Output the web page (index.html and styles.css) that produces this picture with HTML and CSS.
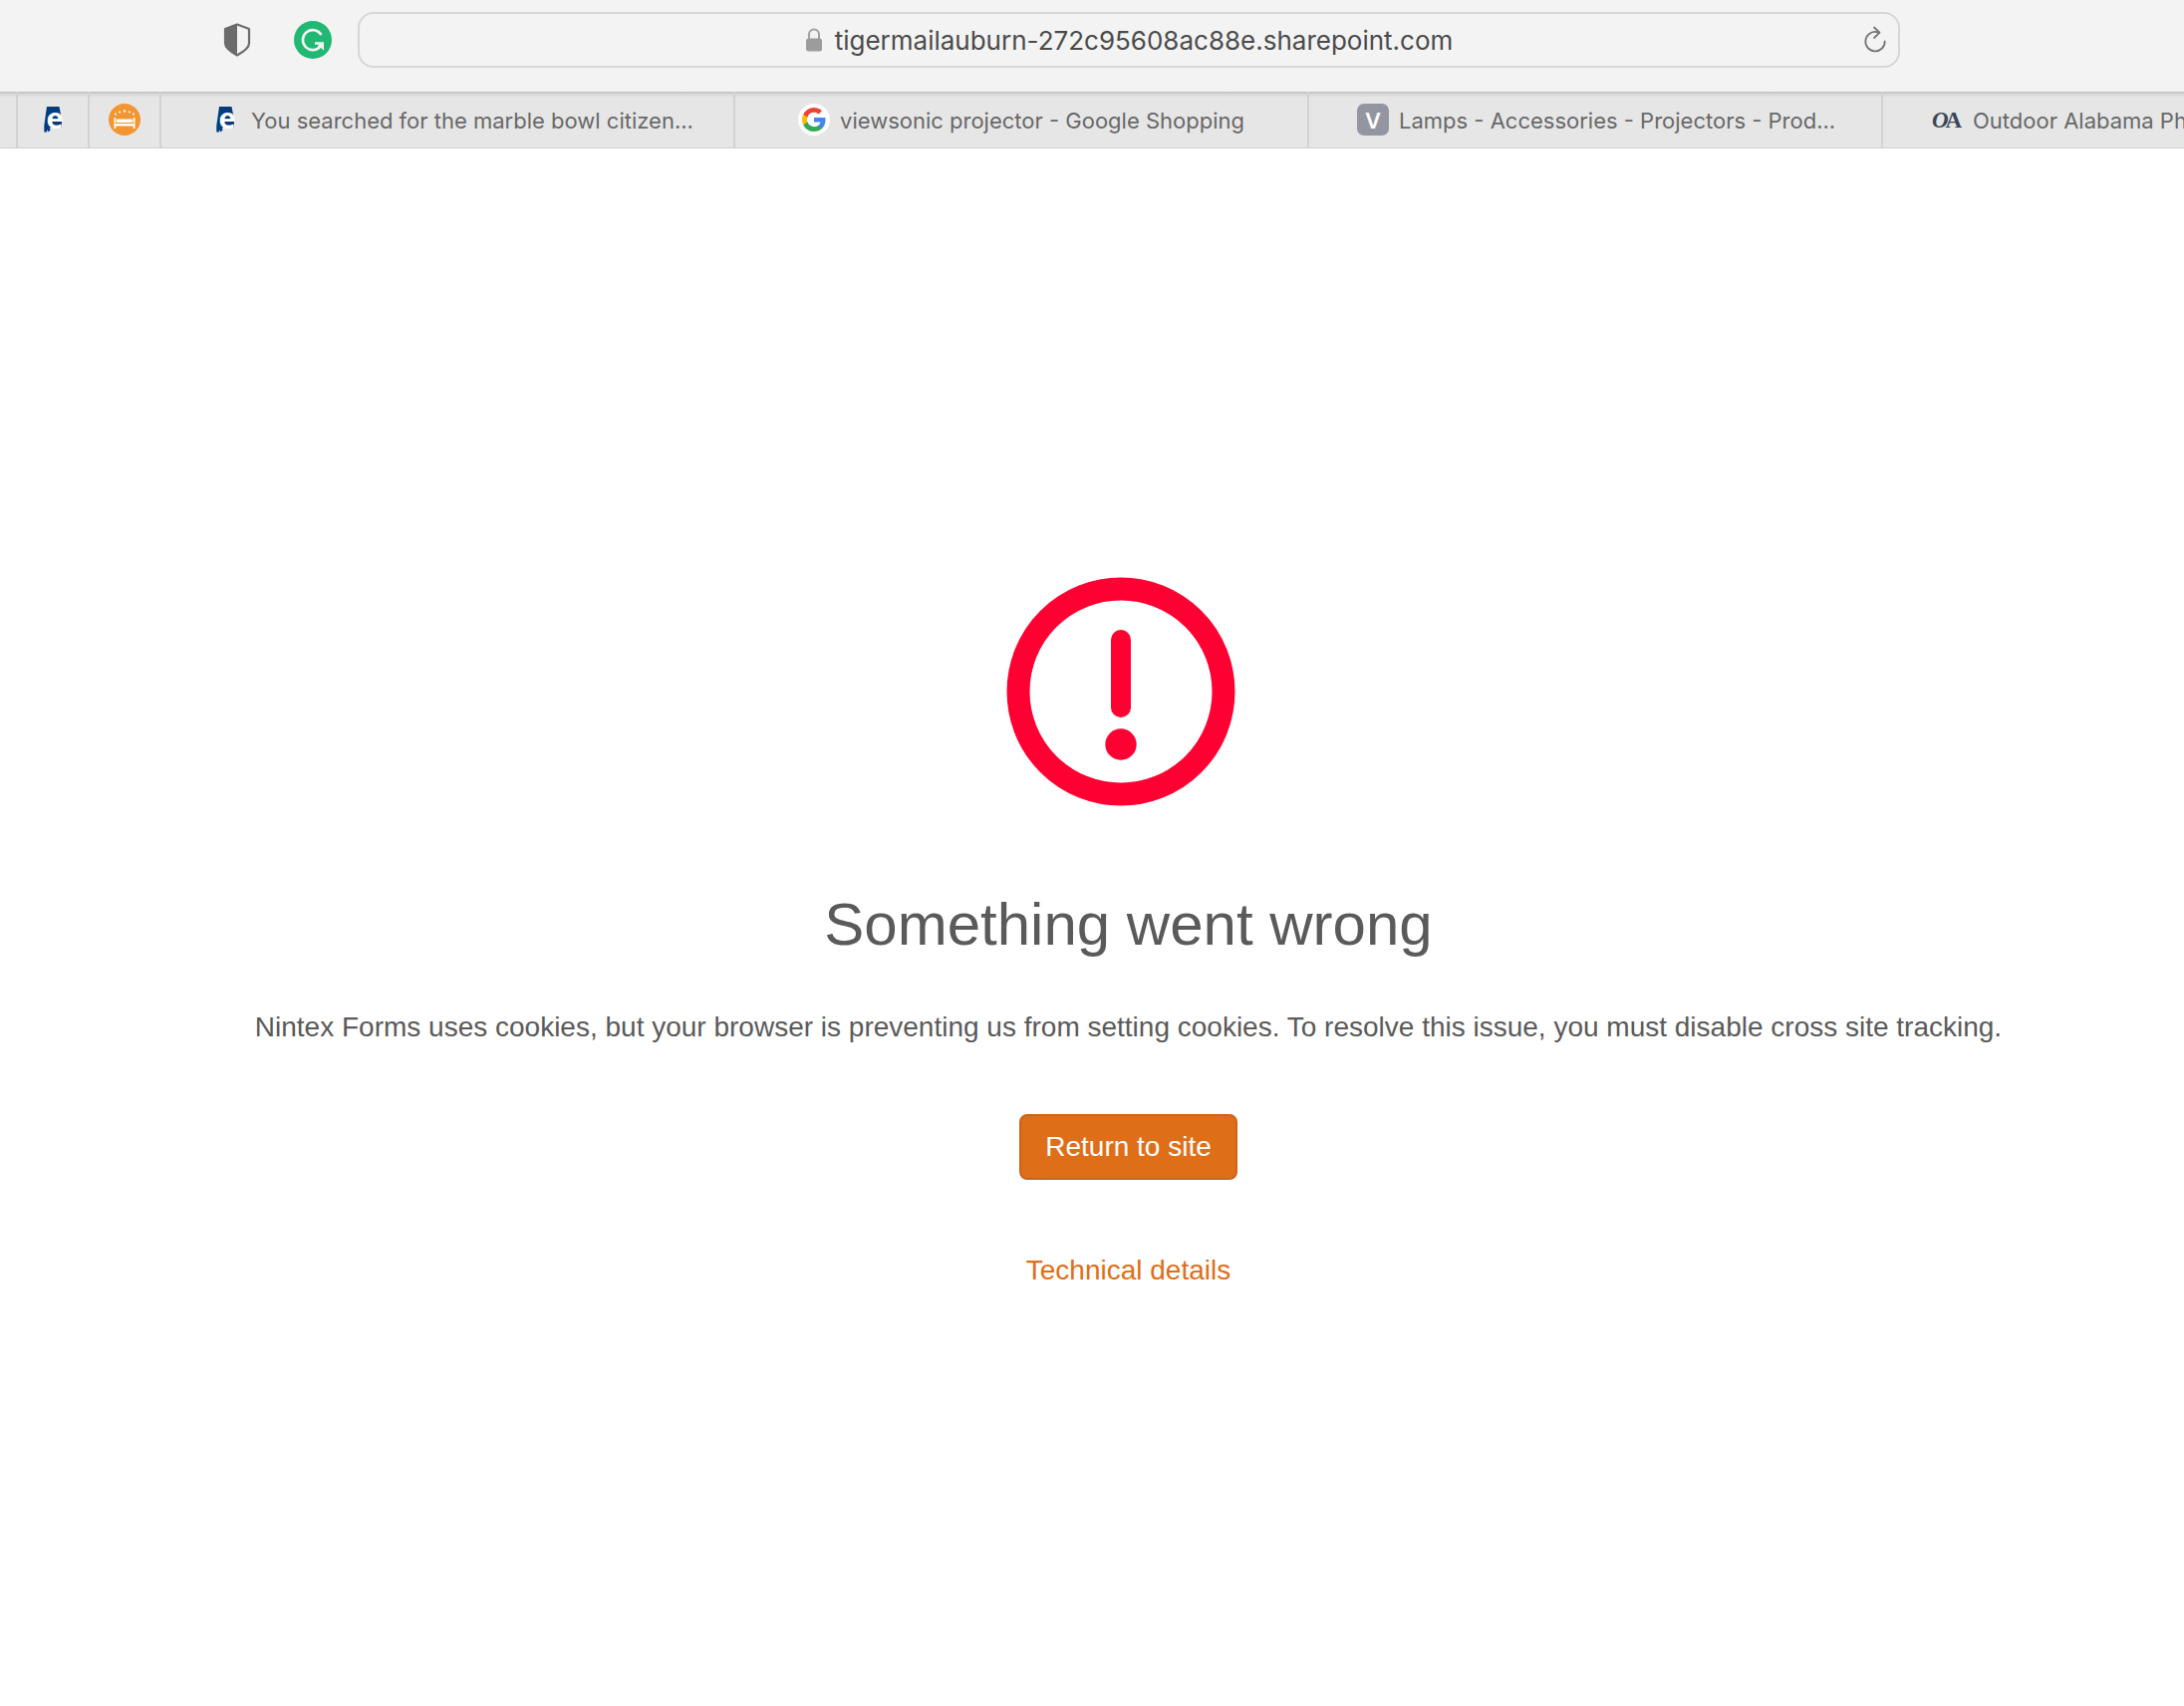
FILE: index.html
```html
<!DOCTYPE html>
<html lang="en">
<head>
<meta charset="utf-8">
<title>Something went wrong</title>
<link rel="stylesheet" href="styles.css">
</head>
<body>
<svg class="symbols" aria-hidden="true">
  <symbol id="state-e" viewBox="0 0 32 32">
    <path d="M10 3H22.500l2.500 13v8H13l.5 2.500-2 2L10.500 26 10 28.500H7.300V22z" fill="#043c7c"/>
    <text x="18" y="25" class="state-letter">e</text>
  </symbol>
</svg>

<header class="toolbar">
  <button class="icon-button" type="button" aria-label="Privacy report">
    <svg width="28" height="34" viewBox="0 0 28 34">
      <path d="M14 1.500 26 6v14.500c0 4-4 7.500-12 12-8-4.500-12-8-12-12V6z" fill="none" stroke="#6b6b6b" stroke-width="2.200" stroke-linejoin="round"/>
      <path d="M14 1.500 2 6v14.500c0 4 4 7.500 12 12z" fill="#6b6b6b"/>
    </svg>
  </button>
  <button class="icon-button" type="button" aria-label="Grammarly">
    <svg width="38" height="38" viewBox="0 0 38 38">
      <circle cx="19" cy="19" r="19" fill="#20b873"/>
      <path d="M27.500 14A10 10 0 1 0 27 25" fill="none" stroke="#f3f3f3" stroke-width="2.600"/>
      <path d="M21 21.300h9v8.500l-3-3-2.500 2-1.500-1.500 2-3.500h-4z" fill="#f3f3f3"/>
    </svg>
  </button>
  <div class="address">
    <div class="address-text">
      <svg width="18" height="24" viewBox="0 0 18 24">
        <path d="M4 12V6.500a5 5 0 0 1 10 0V12" fill="none" stroke="#a0a0a0" stroke-width="2"/>
        <rect x="1" y="10.500" width="16" height="13" rx="2.500" fill="#9c9c9c"/>
      </svg>
      <span>tigermailauburn-272c95608ac88e.sharepoint.com</span>
    </div>
    <button class="icon-button" type="button" aria-label="Reload">
      <svg width="24" height="28" viewBox="0 0 24 28">
        <path d="M14.500 6.300A9.700 9.700 0 1 0 21.700 15.500M11 1.500l5.500 5.200L11 12" fill="none" stroke="#757575" stroke-width="1.800" stroke-linecap="round" stroke-linejoin="round"/>
      </svg>
    </button>
  </div>
</header>

<nav class="tabs" aria-label="Tabs">
  <a class="tab pinned" href="#" aria-label="Encyclopedia of Alabama"><svg class="favicon" viewBox="0 0 32 32"><use href="#state-e"/></svg></a>
  <a class="tab pinned" href="#" aria-label="Lodging">
    <svg class="favicon" viewBox="0 0 32 32">
      <circle cx="16" cy="16" r="16" fill="#f39530"/>
      <g fill="#fff">
        <circle cx="7" cy="10.500" r="1.100"/><circle cx="11" cy="8.500" r="1.100"/><circle cx="16" cy="7.500" r="1.200"/><circle cx="21" cy="8.500" r="1.100"/><circle cx="25" cy="10.500" r="1.100"/>
        <path d="M5.500 14h1.800v6h17.400v-6h1.800v11h-1.800v-2.500H7.300V25H5.500z"/>
        <rect x="8" y="15.500" width="16" height="3.500" rx="1"/>
      </g>
      <path d="M6 19.600h20" stroke="#f39530" stroke-width=".8"/>
    </svg>
  </a>
  <a class="tab long" href="#">
    <svg class="favicon" viewBox="0 0 32 32"><use href="#state-e"/></svg>
    <span class="label">You searched for the marble bowl citizen...</span>
  </a>
  <a class="tab" href="#">
    <svg class="favicon" viewBox="0 0 32 32">
      <circle cx="16" cy="16" r="16" fill="#fff"/>
      <g transform="translate(4 4)">
        <path d="M23.500 12.300c0-.8-.1-1.600-.2-2.300H12v4.500h6.500a5.500 5.500 0 0 1-2.400 3.600v3h3.900c2.200-2.100 3.500-5.200 3.500-8.800z" fill="#4285f4"/>
        <path d="M12 24c3.200 0 6-1.100 8-2.900l-3.900-3a7.200 7.200 0 0 1-10.800-3.800h-4v3.100A12 12 0 0 0 12 24z" fill="#34a853"/>
        <path d="M5.300 14.300a7.200 7.200 0 0 1 0-4.600V6.600h-4a12 12 0 0 0 0 10.800z" fill="#fbbc05"/>
        <path d="M12 4.800c1.800 0 3.300.6 4.600 1.800L20 3.200A12 12 0 0 0 1.300 6.600l4 3.100A7.200 7.200 0 0 1 12 4.800z" fill="#ea4335"/>
      </g>
    </svg>
    <span class="label">viewsonic projector - Google Shopping</span>
  </a>
  <a class="tab long" href="#">
    <span class="favicon letter">V</span>
    <span class="label">Lamps - Accessories - Projectors - Prod...</span>
  </a>
  <a class="tab long" href="#">
    <span class="favicon monogram"><i>O</i>A</span>
    <span class="label">Outdoor Alabama Ph</span>
  </a>
</nav>

<main class="message">
  <svg class="alert" width="230" height="230" viewBox="0 0 230 230" role="img" aria-label="Error">
    <circle cx="115" cy="115" r="103" fill="none" stroke="#ff0032" stroke-width="23"/>
    <rect x="105" y="53" width="20" height="88" rx="10" fill="#ff0032"/>
    <circle cx="115" cy="168" r="15.700" fill="#ff0032"/>
  </svg>
  <h1>Something went wrong</h1>
  <p>Nintex Forms uses cookies, but your browser is preventing us from setting cookies. To resolve this issue, you must disable cross site tracking.</p>
  <button class="return" type="button">Return to site</button>
  <a class="details" href="#">Technical details</a>
</main>
</body>
</html>
```
FILE: styles.css
```css
* {
  box-sizing: border-box;
}

body {
  margin: 0;
  background: #fff;
  color: #5a5a5a;
  font-family: "Liberation Sans", Arial, sans-serif;
  font-size: 28px;
}

svg {
  display: block;
  flex: none;
}

.symbols {
  display: none;
}

.state-letter {
  font: 700 29px "Open Sans", sans-serif;
  text-anchor: middle;
  fill: #fff;
}

.icon-button {
  padding: 0;
  border: 0;
  background: none;
}

.toolbar {
  display: flex;
  align-items: center;
  height: 92px;
  padding: 0 285px 12px 224px;
  background: #f3f3f3;
  font-family: Inter, sans-serif;
}

.toolbar > .icon-button + .icon-button {
  margin: 0 26px 0 43px;
}

.address {
  display: flex;
  flex: 1;
  align-items: center;
  height: 56px;
  padding: 0 11px 0 35px;
  border: 2px solid #d6d6d6;
  border-radius: 16px;
  color: #4b4b4b;
  font-size: 26px;
}

.address-text {
  display: flex;
  flex: 1;
  align-items: center;
  justify-content: center;
  gap: 12px;
}

.tabs {
  display: flex;
  height: 57px;
  padding-left: 16px;
  overflow: hidden;
  border-bottom: 1px solid #d2d2d2;
  background: linear-gradient(#b8b8b8, #d6d6d6 2px, #e6e6e6 6px);
  font-family: Inter, sans-serif;
  font-size: 22px;
}

.tab {
  display: flex;
  flex: 0 0 576px;
  align-items: center;
  justify-content: center;
  gap: 10px;
  border-left: 2px solid #d2d2d2;
  color: #686868;
  text-decoration: none;
  white-space: nowrap;
}

.pinned {
  flex-basis: 72px;
}

.long {
  justify-content: flex-start;
  padding-left: 48px;
}

.label {
  padding-top: 2px;
}

.favicon {
  flex: none;
  width: 32px;
  height: 32px;
  text-align: center;
}

.letter {
  border-radius: 7px;
  background: #9395a1;
  color: #fff;
  font-size: 22px;
  font-weight: 600;
  line-height: 34px;
}

.monogram {
  color: #3b4656;
  font: 700 23px/34px "Liberation Serif", serif;
}

.monogram i {
  margin-right: -3px;
}

.message {
  display: flex;
  flex-direction: column;
  align-items: center;
  padding: 430px 0 60px 73px;
  text-align: center;
}

.alert {
  margin-right: 15px;
}

h1 {
  margin: 84px 0 0;
  font-size: 60px;
  font-weight: 400;
  line-height: 70px;
}

p {
  margin: 52px 0 0;
  line-height: 32px;
}

.return {
  height: 66px;
  margin-top: 71px;
  padding: 0 24px;
  border: 2px solid #cb6419;
  border-radius: 8px;
  background: #df6e19;
  color: #fff;
  font: inherit;
}

.details {
  margin-top: 75px;
  color: #df6e19;
  line-height: 32px;
  text-decoration: none;
}
```
